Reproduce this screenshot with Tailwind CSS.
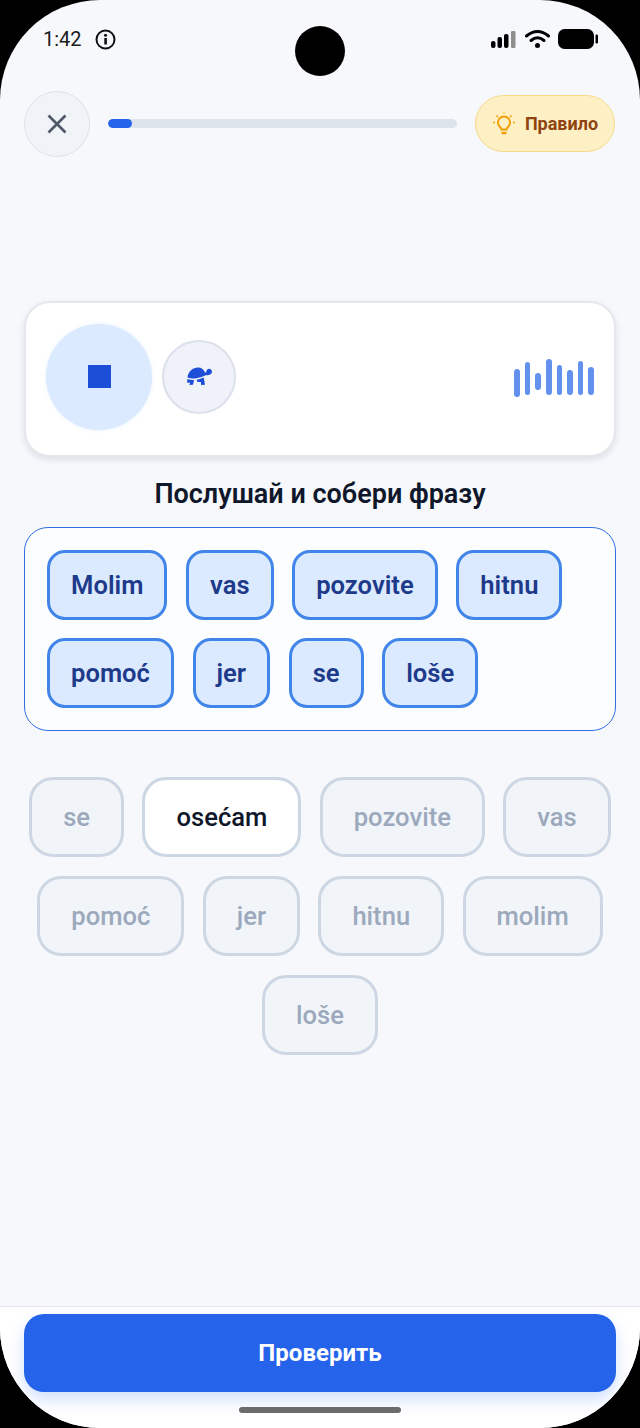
<!DOCTYPE html>
<html lang="ru">
<head>
<meta charset="utf-8">
<script src="https://cdn.jsdelivr.net/npm/@tailwindcss/browser@4"></script>
</head>
<body class="bg-black">
<div class="relative w-[640px] h-[1428px] overflow-hidden rounded-[100px] bg-[#f6f8fc] font-['Roboto',sans-serif] flex flex-col">
  <!-- status bar -->
  <div class="h-[91px] shrink-0 relative">
    <div class="absolute left-[43px] top-[26px] flex items-center gap-[13px] text-[20px] leading-[26px] text-[#1a1a1a]">
      <span>1:42</span>
      <svg width="21" height="21" viewBox="0 0 21 21" fill="none"><circle cx="10.5" cy="10.5" r="9" stroke="#111" stroke-width="2"/><rect x="9.3" y="9" width="2.6" height="6.5" fill="#111"/><circle cx="10.5" cy="6.3" r="1.5" fill="#111"/></svg>
    </div>
    <div class="absolute left-[295px] top-[26px] w-[50px] h-[50px] rounded-full bg-black"></div>
    <div class="absolute left-[490px] top-[29px] flex items-center">
      <svg width="27" height="20" viewBox="0 0 27 20"><rect x="1" y="12" width="4.5" height="7" rx="2" fill="#000"/><rect x="7.5" y="8" width="4.5" height="11" rx="2" fill="#000"/><rect x="14" y="5" width="4.5" height="14" rx="2" fill="#000"/><rect x="21" y="2" width="4.5" height="17" rx="1.2" fill="#8f8f8f"/></svg>
      <svg width="25" height="20" viewBox="0 0 25 20" fill="none" class="ml-[8px]"><path d="M1.5 7 Q12.5 -2 23.5 7" stroke="#000" stroke-width="3" stroke-linecap="round"/><path d="M6 11.5 Q12.5 6 19 11.5" stroke="#000" stroke-width="3" stroke-linecap="round"/><circle cx="12.5" cy="16.5" r="2.5" fill="#000"/></svg>
      <svg width="41" height="20" viewBox="0 0 41 20" class="ml-[8px]"><rect x="0" y="0" width="36" height="20" rx="6.5" fill="#000"/><rect x="37.5" y="5.5" width="2.5" height="9" rx="1.2" fill="#000"/></svg>
    </div>
  </div>

  <!-- header -->
  <div class="flex items-center justify-between pl-[24px] pr-[25px] h-[65px] shrink-0">
    <button class="w-[66px] h-[66px] rounded-full bg-[#f0f3f8] border border-[#dde1e8] flex items-center justify-center">
      <svg width="22" height="22" viewBox="0 0 22 22" fill="none"><path d="M2.5 2.5 L19.5 19.5 M19.5 2.5 L2.5 19.5" stroke="#4d5768" stroke-width="2.6"/></svg>
    </button>
    <div class="w-[349px] h-[9px] ml-[18px] rounded-full bg-[#dde4ec] overflow-hidden">
      <div class="w-[24px] h-full rounded-full bg-[#2563eb]"></div>
    </div>
    <button class="ml-[18px] w-[140px] h-[57px] rounded-full bg-[#fdf0c4] border border-[#f6d98a] flex items-center justify-center gap-[9px] text-[18px] font-bold text-[#8f4310]">
      <svg width="24" height="24" viewBox="0 0 24 24" fill="none" stroke="#f59e0b" stroke-width="2"><path d="M8.3 15.2 A6 6 0 1 1 15.7 15.2 C14.7 16 14.6 16.6 14.6 17.5 H9.4 C9.4 16.6 9.3 16 8.3 15.2 Z"/><path d="M9.5 21 H14.5" stroke-width="2.4"/><path d="M1 10.5 H3 M21 10.5 H23 M4.5 3.5 L6 5 M19.5 3.5 L18 5 M12 0.5 V1.5" stroke-width="1.6"/></svg>
      <span>Правило</span>
    </button>
  </div>

  <!-- audio card -->
  <div class="mt-[145px] mx-[24px] h-[156px] shrink-0 rounded-[26px] bg-white border-2 border-[#e4e7ec] shadow-[0_3px_6px_rgba(15,23,42,0.1)] flex items-center pl-[20px] pr-[20px] pb-[5px]">
    <div class="w-[106px] h-[106px] rounded-full bg-[#dbeafe] shadow-[0_0_4px_rgba(147,197,253,0.2)] flex items-center justify-center">
      <div class="w-[23px] h-[23px] bg-[#1d4ed8]"></div>
    </div>
    <div class="ml-[10px] w-[74px] h-[74px] rounded-full bg-[#eff2f9] border-2 border-[#dbe0ea] flex items-center justify-center">
      <svg width="26" height="19" viewBox="0 0 26 19" fill="#1d4ed8" class="ml-[1px]"><path d="M0.5 10.5 C1 4.5 6 0.5 11 0.5 C14.5 0.5 17 2.6 18 5.5 L19.2 5.3 C19.2 2.6 21.2 1.4 23 1.9 C25 2.4 25.6 4.8 24.4 6.4 C23.1 8 20.6 8.2 18.8 8.3 C17 9 12.5 11 7.5 11.4 C5 11.6 2.5 11.3 0.5 10.5 Z"/><path d="M0.5 12 C2.5 12.8 4.5 13.2 7 13.1 L6 17.8 L2.5 18 L3 15.5 L0 15.8 Z"/><path d="M9.5 12.8 C11.5 12.5 14 11.7 16.7 10.5 L18 17.8 L14 18 L13.9 14.9 L10.5 15 Z"/></svg>
    </div>
    <div class="ml-auto flex items-end gap-[5px] h-[40px]">
      <div class="w-[5.6px] h-[28px] rounded-full bg-[#6391ee]"></div>
      <div class="w-[5.6px] h-[33px] mb-[2px] rounded-full bg-[#6391ee]"></div>
      <div class="w-[5.6px] h-[17px] mb-[7px] rounded-full bg-[#6391ee]"></div>
      <div class="w-[5.6px] h-[36px] mb-[2px] rounded-full bg-[#6391ee]"></div>
      <div class="w-[5.6px] h-[30px] mb-[2px] rounded-full bg-[#6391ee]"></div>
      <div class="w-[5.6px] h-[25px] mb-[2px] rounded-full bg-[#6391ee]"></div>
      <div class="w-[5.6px] h-[34px] mb-[2px] rounded-full bg-[#6391ee]"></div>
      <div class="w-[5.6px] h-[28px] mb-[2px] rounded-full bg-[#6391ee]"></div>
    </div>
  </div>

  <h1 class="mt-[22px] h-[48px] shrink-0 text-center text-[27px] leading-[30px] font-semibold text-[#0f172a]">Послушай и собери фразу</h1>

  <!-- answer -->
  <div class="mx-[24px] h-[204px] shrink-0 rounded-[24px] border border-[#2f6fe0] bg-[#fcfdff] pl-[22px] pt-[22px] flex flex-wrap content-start gap-x-[18.6px] gap-y-[18px] text-[25.6px] font-semibold text-[#1e3a8a]">
    <div class="h-[70px] px-[21px] rounded-[18px] border-[3px] border-[#4285e8] bg-[#dbeafe] flex items-center">Molim</div>
    <div class="h-[70px] px-[21px] rounded-[18px] border-[3px] border-[#4285e8] bg-[#dbeafe] flex items-center">vas</div>
    <div class="h-[70px] px-[21px] rounded-[18px] border-[3px] border-[#4285e8] bg-[#dbeafe] flex items-center">pozovite</div>
    <div class="h-[70px] px-[21px] rounded-[18px] border-[3px] border-[#4285e8] bg-[#dbeafe] flex items-center">hitnu</div>
    <div class="h-[70px] px-[21px] rounded-[18px] border-[3px] border-[#4285e8] bg-[#dbeafe] flex items-center">pomoć</div>
    <div class="h-[70px] px-[21px] rounded-[18px] border-[3px] border-[#4285e8] bg-[#dbeafe] flex items-center">jer</div>
    <div class="h-[70px] px-[21px] rounded-[18px] border-[3px] border-[#4285e8] bg-[#dbeafe] flex items-center">se</div>
    <div class="h-[70px] px-[21px] rounded-[18px] border-[3px] border-[#4285e8] bg-[#dbeafe] flex items-center">loše</div>
  </div>

  <!-- word bank -->
  <div class="mt-[46px] mx-[24px] flex flex-wrap justify-center gap-x-[18.4px] gap-y-[19px] text-[25.6px] font-medium text-[#9ca9bc]">
    <div class="h-[80px] px-[31px] rounded-[24px] border-[3px] border-[#cdd7e3] bg-[#f1f5f9] flex items-center justify-center">se</div>
    <div class="h-[80px] px-[31px] rounded-[24px] border-[3px] border-[#cdd7e3] bg-white flex items-center justify-center text-[#0f172a]">osećam</div>
    <div class="h-[80px] px-[31px] rounded-[24px] border-[3px] border-[#cdd7e3] bg-[#f1f5f9] flex items-center justify-center">pozovite</div>
    <div class="h-[80px] px-[31px] rounded-[24px] border-[3px] border-[#cdd7e3] bg-[#f1f5f9] flex items-center justify-center">vas</div>
    <div class="h-[80px] px-[31px] rounded-[24px] border-[3px] border-[#cdd7e3] bg-[#f1f5f9] flex items-center justify-center">pomoć</div>
    <div class="h-[80px] px-[31px] rounded-[24px] border-[3px] border-[#cdd7e3] bg-[#f1f5f9] flex items-center justify-center">jer</div>
    <div class="h-[80px] px-[31px] rounded-[24px] border-[3px] border-[#cdd7e3] bg-[#f1f5f9] flex items-center justify-center">hitnu</div>
    <div class="h-[80px] px-[31px] rounded-[24px] border-[3px] border-[#cdd7e3] bg-[#f1f5f9] flex items-center justify-center">molim</div>
    <div class="h-[80px] px-[31px] rounded-[24px] border-[3px] border-[#cdd7e3] bg-[#f1f5f9] flex items-center justify-center">loše</div>
  </div>

  <!-- footer -->
  <div class="mt-auto h-[122px] shrink-0 bg-white border-t border-[#e5e7eb] relative px-[24px] pt-[7px]">
    <button class="w-full h-[78px] rounded-[20px] bg-[#2563eb] shadow-[0_8px_16px_rgba(37,99,235,0.2)] text-white text-[24px] font-bold">Проверить</button>
    <div class="absolute left-[239px] top-[100px] w-[162px] h-[6px] rounded-full bg-[#6b6b6b]"></div>
  </div>
</div>
</body>
</html>
